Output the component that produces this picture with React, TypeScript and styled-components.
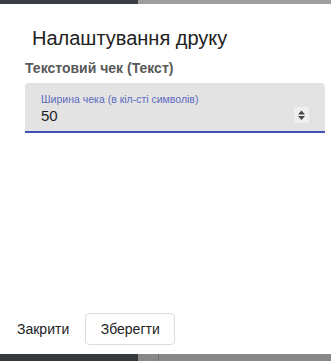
import React from 'react'
import styled, { createGlobalStyle } from 'styled-components'

const GlobalStyle = createGlobalStyle`
  html, body {
    margin: 0;
    padding: 0;
    width: 331px;
    height: 361px;
    overflow: hidden;
    font-family: 'Liberation Sans', Arial, sans-serif;
  }
`

const Screen = styled.div`
  position: relative;
  width: 331px;
  height: 361px;
  display: flex;
  flex-direction: column;
  justify-content: space-between;
  background: #ffffff;
`

const Strip = styled.div<{ $h: number }>`
  height: ${(p) => p.$h}px;
  display: flex;
`

const StripPart = styled.div<{ $w?: number; $bg: string; $line?: boolean }>`
  width: ${(p) => (p.$w ? `${p.$w}px` : 'auto')};
  flex: ${(p) => (p.$w ? 'none' : '1')};
  background: ${(p) => p.$bg};
  border-right: ${(p) => (p.$line ? '1px solid #6f6f6f' : 'none')};
`

const Dialog = styled.div`
  position: absolute;
  left: 1px;
  top: 4px;
  width: 340px;
  height: 350px;
  background: #ffffff;
  border-radius: 4px;
  display: flex;
  flex-direction: column;
  box-sizing: border-box;
`

const Title = styled.h2`
  margin: 0;
  padding: 22px 0 0 31px;
  font-size: 20px;
  font-weight: 400;
  line-height: 24px;
  color: #212121;
`

const Body = styled.div`
  flex: 1;
  padding: 10px 6px 0 24px;
  display: flex;
  flex-direction: column;
`

const Section = styled.div`
  font-size: 14px;
  font-weight: 700;
  color: #595959;
  line-height: 17px;
  margin-bottom: 6px;
`

const Field = styled.label`
  display: flex;
  flex-direction: column;
  width: 300px;
  height: 50px;
  box-sizing: border-box;
  background: #e3e3e3;
  border-radius: 4px 4px 0 0;
  border-bottom: 2px solid #3f51b5;
  padding: 10px 16px 0 16px;
`

const FieldLabel = styled.span`
  font-size: 10.5px;
  line-height: 13px;
  color: #5c6bc0;
`

const InputRow = styled.div`
  display: flex;
  align-items: center;
  margin-top: 1px;
`

const NumberInput = styled.input`
  flex: 1;
  min-width: 0;
  border: none;
  outline: none;
  background: transparent;
  padding: 0;
  margin: 0;
  font-family: 'Liberation Sans', Arial, sans-serif;
  font-size: 15px;
  line-height: 18px;
  color: #1f1f1f;
  -moz-appearance: textfield;

  &::-webkit-inner-spin-button,
  &::-webkit-outer-spin-button {
    -webkit-appearance: none;
    margin: 0;
  }
`

const Spinner = styled.span`
  display: flex;
  width: 15px;
  height: 16px;
  background: #efefef;
  margin-top: -2px;
`

const Actions = styled.div`
  display: flex;
  align-items: center;
  gap: 16px;
  padding: 0 0 9px 16px;
`

const TextButton = styled.button`
  border: none;
  background: transparent;
  padding: 0;
  font-family: 'Liberation Sans', Arial, sans-serif;
  font-size: 14px;
  color: #222222;
`

const OutlineButton = styled.button`
  width: 90px;
  height: 32px;
  border: 1px solid #dcdcdc;
  border-radius: 4px;
  background: #ffffff;
  font-family: 'Liberation Sans', Arial, sans-serif;
  font-size: 14px;
  color: #222222;
`

export default function App() {
  return (
    <>
      <GlobalStyle />
      <Screen>
        <Strip $h={4}>
          <StripPart $w={138} $bg="#3a3d42" />
          <StripPart $bg="#9e9e9e" />
        </Strip>
        <Strip $h={7}>
          <StripPart $w={138} $bg="#35383d" />
          <StripPart $w={20} $bg="#878787" $line />
          <StripPart $bg="#878787" />
        </Strip>
        <Dialog>
          <Title>Налаштування друку</Title>
          <Body>
            <Section>Текстовий чек (Текст)</Section>
            <Field>
              <FieldLabel>Ширина чека (в кіл-сті символів)</FieldLabel>
              <InputRow>
                <NumberInput type="number" defaultValue={50} />
                <Spinner>
                  <svg width="15" height="16" viewBox="0 0 15 16">
                    <path d="M4 7.5 L7.5 3.5 L11 7.5 Z" fill="#454545" />
                    <path d="M4 9 L11 9 L7.5 13 Z" fill="#454545" />
                  </svg>
                </Spinner>
              </InputRow>
            </Field>
          </Body>
          <Actions>
            <TextButton>Закрити</TextButton>
            <OutlineButton>Зберегти</OutlineButton>
          </Actions>
        </Dialog>
      </Screen>
    </>
  )
}
